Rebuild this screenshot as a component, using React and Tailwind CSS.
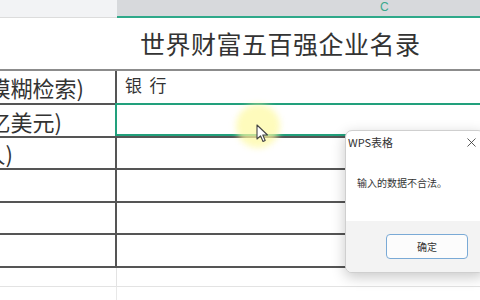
import React from "react";
import { X } from "lucide-react";

const rows = [
  { h: "h-[34px]", left: "企业名称(模糊检索)", ml: "ml-[-107px]", right: "银  行" },
  { h: "h-[33px]", left: "营业收入(亿美元)", ml: "ml-[-107px]", selected: true },
  { h: "h-[32px]", left: "员工人数(人)", ml: "ml-[-112px]" },
  { h: "h-[33px]" },
  { h: "h-[32px]" },
  { h: "h-[33px]" },
];

export default function App() {
  return (
    <div className="relative w-[480px] h-[300px] overflow-hidden bg-white font-['Noto_Sans_CJK_SC',sans-serif] text-[#2b2b2b]">
      {/* column header */}
      <div className="flex h-[18px]">
        <div className="w-[117px] bg-[#f2f3f5] border-b border-[#dcdcdc]" />
        <div className="flex-1 bg-[#d7d9dc] border-b-2 border-[#2fa98a] pl-[263px] text-[12px] leading-[15px] text-[#3aa88c] font-['Liberation_Sans',sans-serif]">
          C
        </div>
      </div>

      {/* title */}
      <div className="h-[53px] border-b-2 border-[#8c8c8c] flex items-center pl-[140px] text-[25px] tracking-[0.5px] text-[#333]">
        世界财富五百强企业名录
      </div>

      {rows.map((r, i) => (
        <div key={i} className={`flex ${r.h} border-b-2 border-[#555]`}>
          <div className="w-[117px] shrink-0 border-r-2 border-[#555] overflow-hidden flex items-center">
            {r.left && (
              <span className={`${r.ml} whitespace-nowrap text-[22px] leading-none text-[#333]`}>
                {r.left}
              </span>
            )}
          </div>
          <div className="relative flex-1 flex items-center pl-[8px]">
            {r.right && (
              <span className="whitespace-pre text-[17px] leading-none text-[#333] mt-[-6px]">{r.right}</span>
            )}
            {r.selected && (
              <div className="absolute -left-[2px] -top-[2px] -right-[4px] bottom-0 border-2 border-[#22a07c]" />
            )}
          </div>
        </div>
      ))}

      {/* plain grid below */}
      <div className="flex h-[19px] border-b border-[#e3e3e3]">
        <div className="w-[117px] border-r border-[#e3e3e3]" />
      </div>
      <div className="flex h-[20px]">
        <div className="w-[117px] border-r border-[#e8e8e8]" />
      </div>

      {/* cursor highlight */}
      <div className="absolute left-[236px] top-[104px] w-[44px] h-[44px] rounded-full bg-[#fdf9a0]/70 blur-[3px]" />
      <svg className="absolute left-[256px] top-[124px]" width="13" height="19" viewBox="0 0 13 19">
        <path d="M1 1 L1 15 L4.5 11.8 L7 17.5 L9.2 16.5 L6.8 11 L11.5 11 Z" fill="#fff" stroke="#444" strokeWidth="1.1" strokeLinejoin="round" />
      </svg>

      {/* dialog */}
      <div className="absolute left-[345px] top-[130px] w-[140px] h-[143px] rounded-[7px] bg-white border border-[#cfcfcf] shadow-[0_4px_14px_rgba(0,0,0,0.22)] overflow-hidden flex flex-col">
        <div className="flex items-start justify-between pl-[2px] pr-[5px] pt-[5px] h-[46px]">
          <span className="text-[11px] leading-[12px] text-[#333]">WPS表格</span>
          <X size={15} strokeWidth={1.3} className="text-[#333] -mt-[1px]" />
        </div>
        <div className="flex-1 pl-[11px] text-[10px] leading-[12px] text-[#333]">输入的数据不合法。</div>
        <div className="h-[51px] bg-[#f3f3f3] pl-[40px] pt-[13px]">
          <div className="w-[82px] h-[25px] rounded-[4px] border-[1.5px] border-[#7aaad6] bg-[#fcfcfc] flex items-center justify-center text-[10px] text-[#333]">
            确定
          </div>
        </div>
      </div>
    </div>
  );
}
